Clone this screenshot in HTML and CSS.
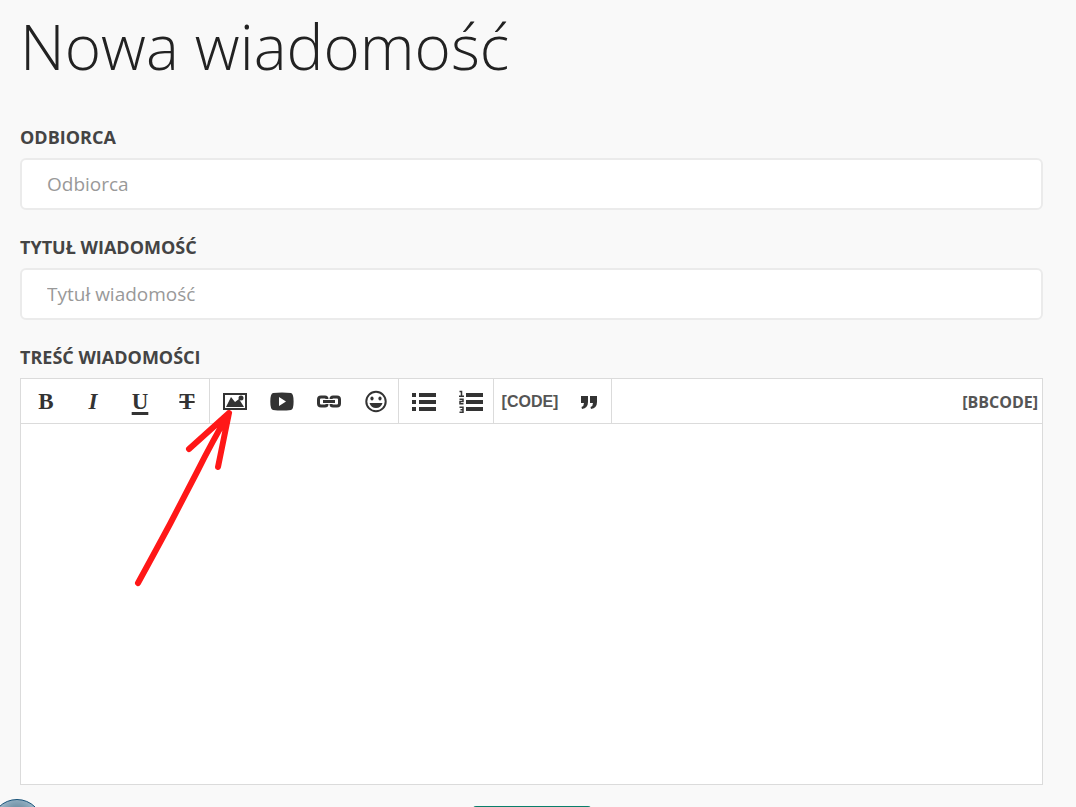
FILE: index.html
```html
<!DOCTYPE html>
<html lang="pl">
<head>
<meta charset="utf-8">
<meta name="viewport" content="width=device-width, initial-scale=1">
<title>Nowa wiadomość</title>
<link rel="stylesheet" href="styles.css">
</head>
<body>
<main class="page">
  <h1 class="title">Nowa wiadomość</h1>
  <form class="form">
    <div class="field">
      <label class="label" for="recipient">ODBIORCA</label>
      <input class="input" id="recipient" type="text" placeholder="Odbiorca">
    </div>
    <div class="field">
      <label class="label" for="subject">TYTUŁ WIADOMOŚĆ</label>
      <input class="input" id="subject" type="text" placeholder="Tytuł wiadomość">
    </div>
    <div class="field">
      <label class="label" for="message">TREŚĆ WIADOMOŚCI</label>
      <div class="editor">
        <div class="toolbar">
          <div class="group">
            <button class="tool glyph" type="button">B</button>
            <button class="tool glyph italic" type="button">I</button>
            <button class="tool glyph underline" type="button">U</button>
            <button class="tool glyph strike" type="button">T</button>
          </div>
          <div class="group">
            <button class="tool" type="button" aria-label="Obraz">
              <svg class="icon" width="26" height="24" viewBox="0 0 26 24"><path fill-rule="evenodd" d="M1 4h24v17H1zM3 6v13h20V6z"/><path d="M4 18l5-10 4 5 4-3 5 8z"/><circle cx="19" cy="9" r="2.5"/></svg>
            </button>
            <button class="tool" type="button" aria-label="Wideo">
              <svg class="icon" width="26" height="24" viewBox="0 0 26 24"><path fill-rule="evenodd" d="M4 4Q13 3 22 4Q24.600 4.500 24.600 12.500Q24.600 20.500 22 21Q13 22 4 21Q1.300 20.500 1.300 12.500Q1.300 4.500 4 4zM10 8v9l7-4.500z"/></svg>
            </button>
            <button class="tool" type="button" aria-label="Odnośnik">
              <svg class="icon line" width="26" height="24" viewBox="0 0 26 24"><path d="M11 10Q11 8 9 8H5Q2.500 8 2.500 10.500v4Q2.500 17 5 17h4q2 0 2-2M15 10Q15 8 17 8h4q2.500 0 2.500 2.500v4Q23.500 17 21 17h-4q-2 0-2-2"/><path d="M7 12.500h12"/></svg>
            </button>
            <button class="tool" type="button" aria-label="Emotikona">
              <svg class="icon" width="26" height="24" viewBox="0 0 26 24"><circle class="ring" cx="13" cy="12.500" r="9.700"/><ellipse cx="9" cy="9.500" rx="1.600" ry="2"/><ellipse cx="17" cy="9.500" rx="1.600" ry="2"/><path d="M6.500 14h13Q18 19 13 19T6.500 14z"/></svg>
            </button>
          </div>
          <div class="group">
            <button class="tool" type="button" aria-label="Lista punktowana">
              <svg class="icon" width="26" height="24" viewBox="0 0 26 24"><path d="M1 4h4v4H1zm7 0h17v4H8zM1 11h4v4H1zm7 0h17v4H8zM1 18h4v4H1zm7 0h17v4H8z"/></svg>
            </button>
            <button class="tool" type="button" aria-label="Lista numerowana">
              <svg class="icon" width="26" height="24" viewBox="0 0 26 24"><path d="M8 4h17v4H8zm0 7h17v4H8zm0 7h17v4H8z"/><path class="thin" d="M1.500 2.500h2v4.500M1 7.200h5M1.500 10.200H5V12.500H2v2.300h3.500M1.500 18.200H5v5H1.500M2.500 20.700H5"/></svg>
            </button>
          </div>
          <div class="group">
            <button class="tool code" type="button">[CODE]</button>
            <button class="tool" type="button" aria-label="Cytat">
              <svg class="icon" width="26" height="24" viewBox="0 0 26 24"><path d="M5 7h7v6q0 6-6 7l-.500-2Q8 17 8 14H5zM14 7h7v6q0 6-6 7l-.500-2q2.500-1 2.500-4H14z"/></svg>
            </button>
          </div>
          <button class="bbcode" type="button">[BBCODE]</button>
        </div>
        <textarea class="message" id="message"></textarea>
        <svg class="arrow" width="110" height="186" viewBox="0 0 110 186"><path d="M7 174Q24 143 39 115L66 63Q82 31 98 4L58 40M98 4L87 58"/></svg>
      </div>
    </div>
    <button class="send" type="submit" aria-label="Wyślij"></button>
  </form>
</main>
<div class="orb"></div>
</body>
</html>
```
FILE: styles.css
```css
* {
  box-sizing: border-box;
}

body {
  margin: 0;
  height: 100vh;
  overflow: hidden;
  background: #f9f9f9;
  color: #444;
  font-family: "Open Sans", "Noto Sans", sans-serif;
}

.page {
  padding: 6px 33px 0 20px;
}

.title {
  margin: 0;
  color: #222;
  font-size: 62px;
  font-weight: 300;
  line-height: 80px;
}

.form {
  display: flex;
  flex-direction: column;
  gap: 24px;
  padding-top: 38px;
}

.field {
  display: flex;
  flex-direction: column;
  gap: 7px;
}

.label {
  font-size: 18px;
  font-weight: 700;
  line-height: 27px;
}

.input {
  width: 100%;
  height: 52px;
  padding: 0 25px;
  border: 2px solid #ebebeb;
  border-radius: 6px;
  background: #fff;
  color: #444;
  font: 19px "Open Sans", "Noto Sans", sans-serif;
}

.input::placeholder {
  color: #999;
  opacity: 1;
}

.editor {
  position: relative;
  border: 1px solid #dbdbdb;
  background: #fff;
}

.toolbar {
  display: flex;
  height: 45px;
  border-bottom: 1px solid #dbdbdb;
}

.group {
  display: flex;
  border-right: 1px solid #dbdbdb;
}

.tool {
  display: flex;
  align-items: center;
  justify-content: center;
  width: 47px;
  padding: 0 0 0 3px;
  border: 0;
  background: none;
  color: #333;
}

.glyph {
  padding-top: 2px;
  font: 700 23px/24px "Liberation Serif", serif;
}

.italic {
  font-style: italic;
}

.underline {
  text-decoration: underline 3px;
  text-underline-offset: 3px;
}

.strike {
  text-decoration: line-through 2px;
}

.icon {
  fill: #333;
}

.line {
  fill: none;
  stroke: #333;
  stroke-width: 3;
}

.ring {
  fill: none;
  stroke: #333;
  stroke-width: 2;
}

.thin {
  fill: none;
  stroke: #333;
  stroke-width: 1.5;
}

.code {
  width: 70px;
  padding: 2px 0 0 2px;
  color: #555;
  font: 700 16px "Liberation Sans", sans-serif;
}

.bbcode {
  margin-left: auto;
  padding: 2px 4px 0;
  border: 0;
  background: none;
  color: #555;
  font: 700 16px "Open Sans", "Noto Sans", sans-serif;
}

.message {
  display: block;
  width: 100%;
  height: 360px;
  padding: 12px;
  border: 0;
  outline: 0;
  resize: none;
  background: #fff;
  font: 16px "Open Sans", "Noto Sans", sans-serif;
}

.arrow {
  position: absolute;
  top: 30px;
  left: 110px;
  fill: none;
  stroke: #ff1717;
  stroke-width: 6;
  stroke-linecap: round;
  stroke-linejoin: round;
  pointer-events: none;
}

.send {
  align-self: center;
  width: 118px;
  height: 48px;
  margin-top: -3px;
  border: 0;
  border-radius: 3px;
  background: #0b7f6b;
}

.orb {
  position: fixed;
  bottom: -44px;
  left: -9px;
  width: 52px;
  height: 52px;
  border: 1px solid #155077;
  border-radius: 50%;
  background: radial-gradient(circle at 50% 30%, #55798f 0, #9db8ca 45%, #c8dae5 65%, #7fa3ba 100%);
}
```
